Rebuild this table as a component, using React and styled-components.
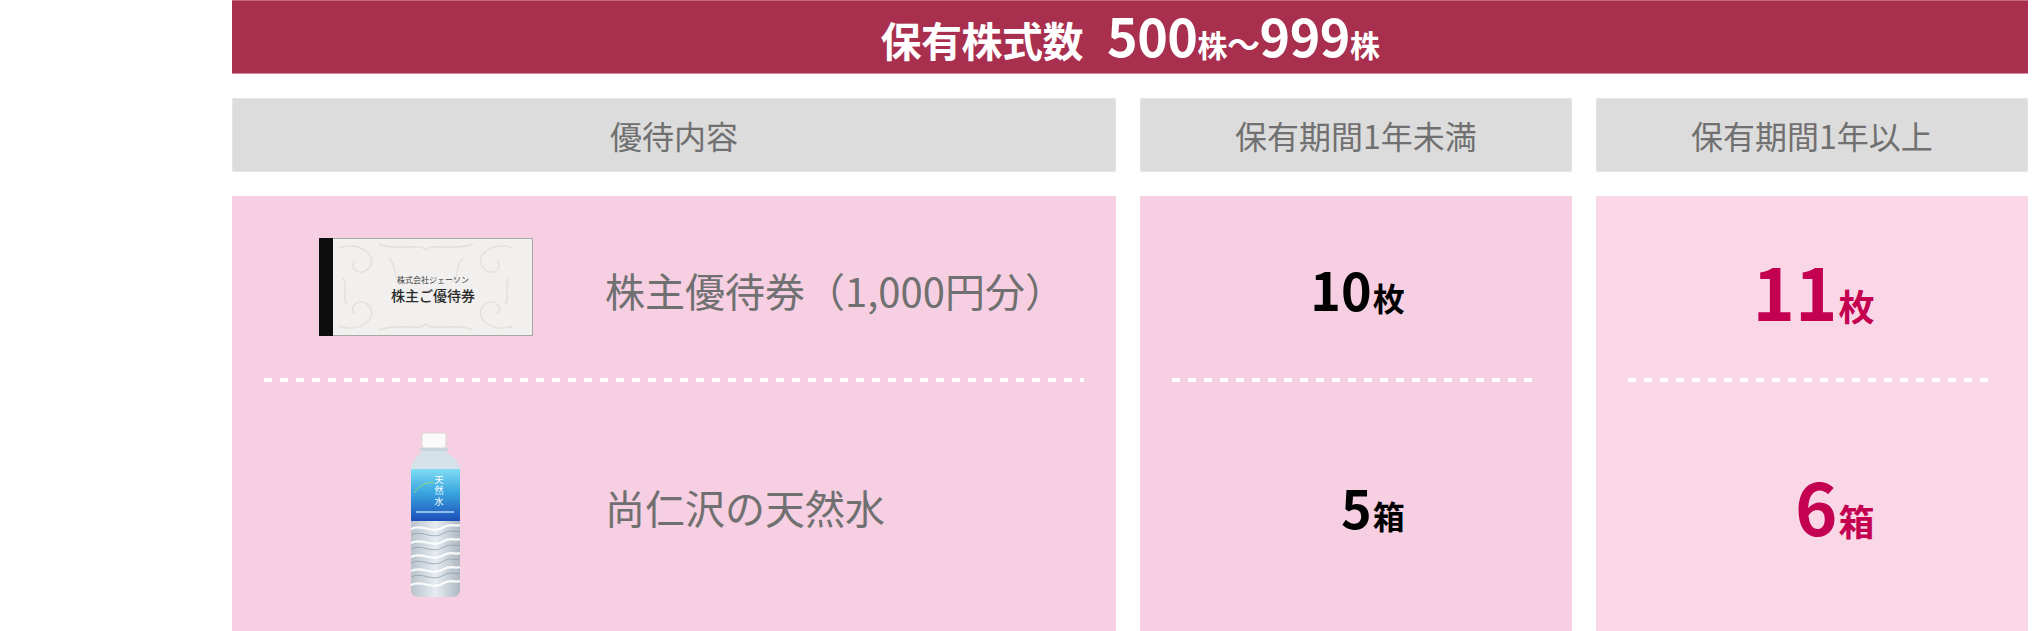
import React from "react";
import styled, { createGlobalStyle } from "styled-components";

const GlobalStyle = createGlobalStyle`
  html, body { margin: 0; padding: 0; background: #ffffff; }
  body { font-family: "Noto Sans CJK JP", "Noto Sans", sans-serif; }
`;

const Page = styled.div`
  padding: 0 12px 0 232px;
  width: 1796px;
`;

const TitleBar = styled.div`
  height: 74px;
  box-sizing: border-box;
  background: #a92f4f;
  border-top: 1px solid #c26a82;
  border-bottom: 1px solid #d68fa3;
  display: flex;
  align-items: center;
  justify-content: center;
  padding-bottom: 4px;
`;

const TitleText = styled.div`
  color: #ffffff;
  font-weight: 700;
  font-size: 41px;
  line-height: 1;
  white-space: nowrap;
  letter-spacing: -0.5px;
`;

const Range = styled.span`
  margin-left: 24px;
  font-size: 52px;
`;

const TitleUnit = styled.span`
  font-size: 30px;
`;

const Wave = styled.span`
  font-size: 33px;
`;

const Columns = styled.div`
  display: grid;
  grid-template-columns: 884px 432px 432px;
  column-gap: 24px;
  margin-top: 24px;
`;

const HeadCell = styled.div`
  height: 74px;
  box-sizing: border-box;
  background: #dcdcdc;
  border: 1px solid #e6e6e6;
  display: flex;
  align-items: center;
  justify-content: center;
  font-size: 32px;
  color: #707070;
  line-height: 1;
`;

const ContentColumn = styled.div`
  background: #f6cfe2;
  display: grid;
  grid-template-rows: 182px 4px 250px;
`;

const ItemRow = styled.div`
  display: grid;
  grid-template-columns: 376px 1fr;
  align-items: center;
`;

const ImageCell = styled.div`
  display: flex;
  justify-content: center;
  align-items: center;
  padding-left: 12px;
`;

const ItemName = styled.div`
  font-size: 40px;
  color: #707070;
  line-height: 1;
  white-space: nowrap;
  margin-left: -3px;
  padding-top: ${(p) => p.$shift || 0}px;
`;

const Dash = styled.div`
  grid-column: 1 / -1;
  margin: 0 32px;
  height: 4px;
  background: repeating-linear-gradient(
    90deg,
    #ffffff 0 8px,
    transparent 8px 16px
  );
`;

const ValueColumn = styled.div`
  background: ${(p) => p.$bg};
  display: grid;
  grid-template-columns: 1fr auto 1fr;
  grid-template-rows: 182px 4px 250px;
`;

const Value = styled.div`
  grid-column: 2;
  justify-self: end;
  align-self: center;
  line-height: 1;
  white-space: nowrap;
  font-weight: 700;
  color: ${(p) => p.$color};
  font-size: ${(p) => p.$num}px;
  padding-top: ${(p) => p.$shift || 0}px;
  padding-bottom: ${(p) => p.$lift || 0}px;
  margin-left: 3px;
`;

const Unit = styled.span`
  font-size: ${(p) => p.$size}px;
  margin-left: 1px;
`;

const Ticket = () => (
  <svg width="214" height="98" viewBox="0 0 214 98">
    <rect x="0.5" y="0.5" width="213" height="97" fill="#f1f0ee" stroke="#a8a8a8" />
    <g fill="none" stroke="#e2e0dc" strokeWidth="1.4">
      <path d="M20 10 C40 2 60 18 50 30 C42 40 28 30 36 22" />
      <path d="M194 10 C174 2 154 18 164 30 C172 40 186 30 178 22" />
      <path d="M20 88 C40 96 60 80 50 68 C42 58 28 68 36 76" />
      <path d="M194 88 C174 96 154 80 164 68 C172 58 186 68 178 76" />
      <path d="M60 6 C80 14 100 4 107 12 C114 4 134 14 154 6" />
      <path d="M60 92 C80 84 100 94 107 86 C114 94 134 84 154 92" />
      <path d="M24 40 C30 50 22 60 28 66" />
      <path d="M190 40 C184 50 192 60 186 66" />
      <path d="M70 20 C80 30 72 40 82 44" />
      <path d="M144 20 C134 30 142 40 132 44" />
    </g>
    <rect x="0" y="0" width="14" height="98" fill="#0d0d0d" />
    <text
      x="114"
      y="45"
      textAnchor="middle"
      fontSize="8"
      fill="#3a3a3a"
      fontFamily="'Noto Sans CJK JP', sans-serif"
    >
      株式会社ジェーソン
    </text>
    <text
      x="114"
      y="63"
      textAnchor="middle"
      fontSize="14"
      fill="#2a2a2a"
      fontWeight="500"
      fontFamily="'Noto Sans CJK JP', sans-serif"
    >
      株主ご優待券
    </text>
  </svg>
);

const Bottle = () => (
  <svg width="68" height="180" viewBox="0 0 68 180">
    <defs>
      <linearGradient id="lbl" x1="0" y1="0" x2="0" y2="1">
        <stop offset="0" stopColor="#7fdcf2" />
        <stop offset="0.45" stopColor="#3aa6e0" />
        <stop offset="1" stopColor="#1c4fb8" />
      </linearGradient>
      <linearGradient id="body" x1="0" y1="0" x2="1" y2="0">
        <stop offset="0" stopColor="#b9c3cc" />
        <stop offset="0.5" stopColor="#e6ecf1" />
        <stop offset="1" stopColor="#aeb8c2" />
      </linearGradient>
    </defs>
    <rect x="30" y="16" width="24" height="15" rx="2" fill="#fafafa" stroke="#d8d8d8" />
    <path d="M29 31 H55 V36 C62 40 68 46 68 52 H19 C19 46 24 40 29 36 Z" fill="#d6e2ea" />
    <rect x="28" y="31" width="28" height="3" fill="#c8d4dc" />
    <rect x="19" y="52" width="49" height="52" fill="url(#lbl)" />
    <text x="47" y="66" fontSize="9" fill="#ffffff" textAnchor="middle" fontFamily="'Noto Sans CJK JP', sans-serif">天</text>
    <text x="47" y="77" fontSize="9" fill="#ffffff" textAnchor="middle" fontFamily="'Noto Sans CJK JP', sans-serif">然</text>
    <text x="47" y="88" fontSize="9" fill="#ffffff" textAnchor="middle" fontFamily="'Noto Sans CJK JP', sans-serif">水</text>
    <path d="M22 76 C28 68 36 64 42 66" stroke="#9be06a" strokeWidth="0.8" fill="none" />
    <rect x="24" y="94" width="38" height="2" fill="#bfe0ff" opacity="0.7" />
    <path d="M19 104 H68 V172 C68 178 64 180 60 180 H27 C23 180 19 178 19 172 Z" fill="url(#body)" />
    <g fill="none" stroke="#ffffff" strokeWidth="2.2" opacity="0.9">
      <path d="M19 112 C30 106 40 118 52 110 C58 106 64 110 68 108" />
      <path d="M19 126 C30 120 40 132 52 124 C58 120 64 124 68 122" />
      <path d="M19 140 C30 134 40 146 52 138 C58 134 64 138 68 136" />
      <path d="M19 154 C30 148 40 160 52 152 C58 148 64 152 68 150" />
      <path d="M19 168 C30 162 40 174 52 166 C58 162 64 166 68 164" />
    </g>
    <g fill="none" stroke="#8d99a6" strokeWidth="1" opacity="0.7">
      <path d="M19 118 C30 112 40 124 52 116 C58 112 64 116 68 114" />
      <path d="M19 132 C30 126 40 138 52 130 C58 126 64 130 68 128" />
      <path d="M19 146 C30 140 40 152 52 144 C58 140 64 144 68 142" />
      <path d="M19 160 C30 154 40 166 52 158 C58 154 64 158 68 156" />
    </g>
  </svg>
);

const PINK = "#c40050";

export default function App() {
  return (
    <>
      <GlobalStyle />
      <Page>
        <TitleBar>
          <TitleText>
            保有株式数
            <Range>
              500<TitleUnit>株</TitleUnit>
              <Wave>〜</Wave>999<TitleUnit>株</TitleUnit>
            </Range>
          </TitleText>
        </TitleBar>

        <Columns>
          <HeadCell>優待内容</HeadCell>
          <HeadCell>保有期間1年未満</HeadCell>
          <HeadCell>保有期間1年以上</HeadCell>
        </Columns>

        <Columns>
          <ContentColumn>
            <ItemRow>
              <ImageCell>
                <Ticket />
              </ImageCell>
              <ItemName $shift={6}>株主優待券（1,000円分）</ItemName>
            </ItemRow>
            <Dash />
            <ItemRow>
              <ImageCell>
                <Bottle />
              </ImageCell>
              <ItemName>尚仁沢の天然水</ItemName>
            </ItemRow>
          </ContentColumn>

          <ValueColumn $bg="#f6cfe2">
            <Value $color="#000000" $num={52} $shift={4}>
              10<Unit $size={32}>枚</Unit>
            </Value>
            <Dash />
            <Value $color="#000000" $num={52}>
              5<Unit $size={32}>箱</Unit>
            </Value>
          </ValueColumn>

          <ValueColumn $bg="#f9d7e6">
            <Value $color={PINK} $num={72} $shift={6}>
              11<Unit $size={36}>枚</Unit>
            </Value>
            <Dash />
            <Value $color={PINK} $num={72} $lift={4}>
              6<Unit $size={36}>箱</Unit>
            </Value>
          </ValueColumn>
        </Columns>
      </Page>
    </>
  );
}
